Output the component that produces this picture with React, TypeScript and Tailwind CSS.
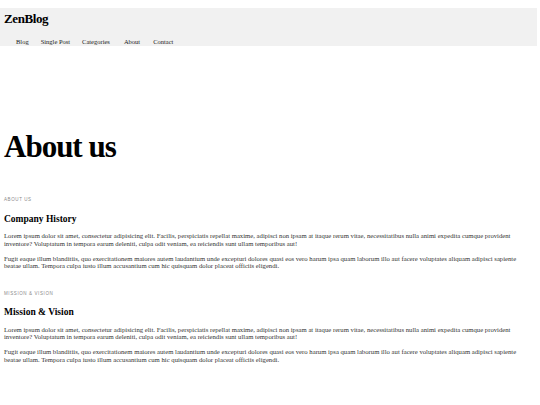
export default function App() {
  const p1 =
    "Lorem ipsum dolor sit amet, consectetur adipisicing elit. Facilis, perspiciatis repellat maxime, adipisci non ipsam at itaque rerum vitae, necessitatibus nulla animi expedita cumque provident inventore? Voluptatum in tempora earum deleniti, culpa odit veniam, ea reiciendis sunt ullam temporibus aut!";
  const p2 =
    "Fugit eaque illum blanditiis, quo exercitationem maiores autem laudantium unde excepturi dolores quasi eos vero harum ipsa quam laborum illo aut facere voluptates aliquam adipisci sapiente beatae ullam. Tempora culpa iusto illum accusantium cum hic quisquam dolor placeat officiis eligendi.";

  const sections = [
    { label: "ABOUT US", title: "Company History" },
    { label: "MISSION & VISION", title: "Mission & Vision" },
  ];

  return (
    <div className="min-h-[405px] bg-white text-black font-['Liberation_Serif',serif]">
      <header className="mt-2 mr-[3px] bg-[#f1f1f1] px-1 pt-[2px]">
        <div className="text-[13px] font-bold leading-[18px] tracking-[-0.4px]">ZenBlog</div>
        <nav className="mt-[10px] flex pl-3 text-[6.5px] leading-[8px] text-[#222]">
          <a className="mr-[12px]">Blog</a>
          <a className="mr-[12px]">Single Post</a>
          <a className="mr-[14px]">Categories</a>
          <a className="mr-[13px]">About</a>
          <a>Contact</a>
        </nav>
      </header>

      <main className="px-1">
        <h1 className="mt-[83px] text-[31px] font-bold leading-[36px] tracking-[-1px]">About us</h1>

        <div className="mt-[32px]">
          {sections.map((s, i) => (
            <section key={s.label} className={i > 0 ? "mt-[21px]" : ""}>
              <div className="font-['Liberation_Sans',sans-serif] text-[4.5px] leading-[6px] tracking-[0.6px] text-[#8a8a8a]">
                {s.label}
              </div>
              <h2 className="mt-[9.5px] text-[9.5px] font-bold leading-[12px]">{s.title}</h2>
              <p className="mt-[7.5px] pr-[14px] text-[6.7px] leading-[7.5px] text-[#333]">{p1}</p>
              <p className="mt-[7.5px] pr-[14px] text-[6.7px] leading-[7.5px] text-[#333]">{p2}</p>
            </section>
          ))}
        </div>
      </main>
    </div>
  );
}
